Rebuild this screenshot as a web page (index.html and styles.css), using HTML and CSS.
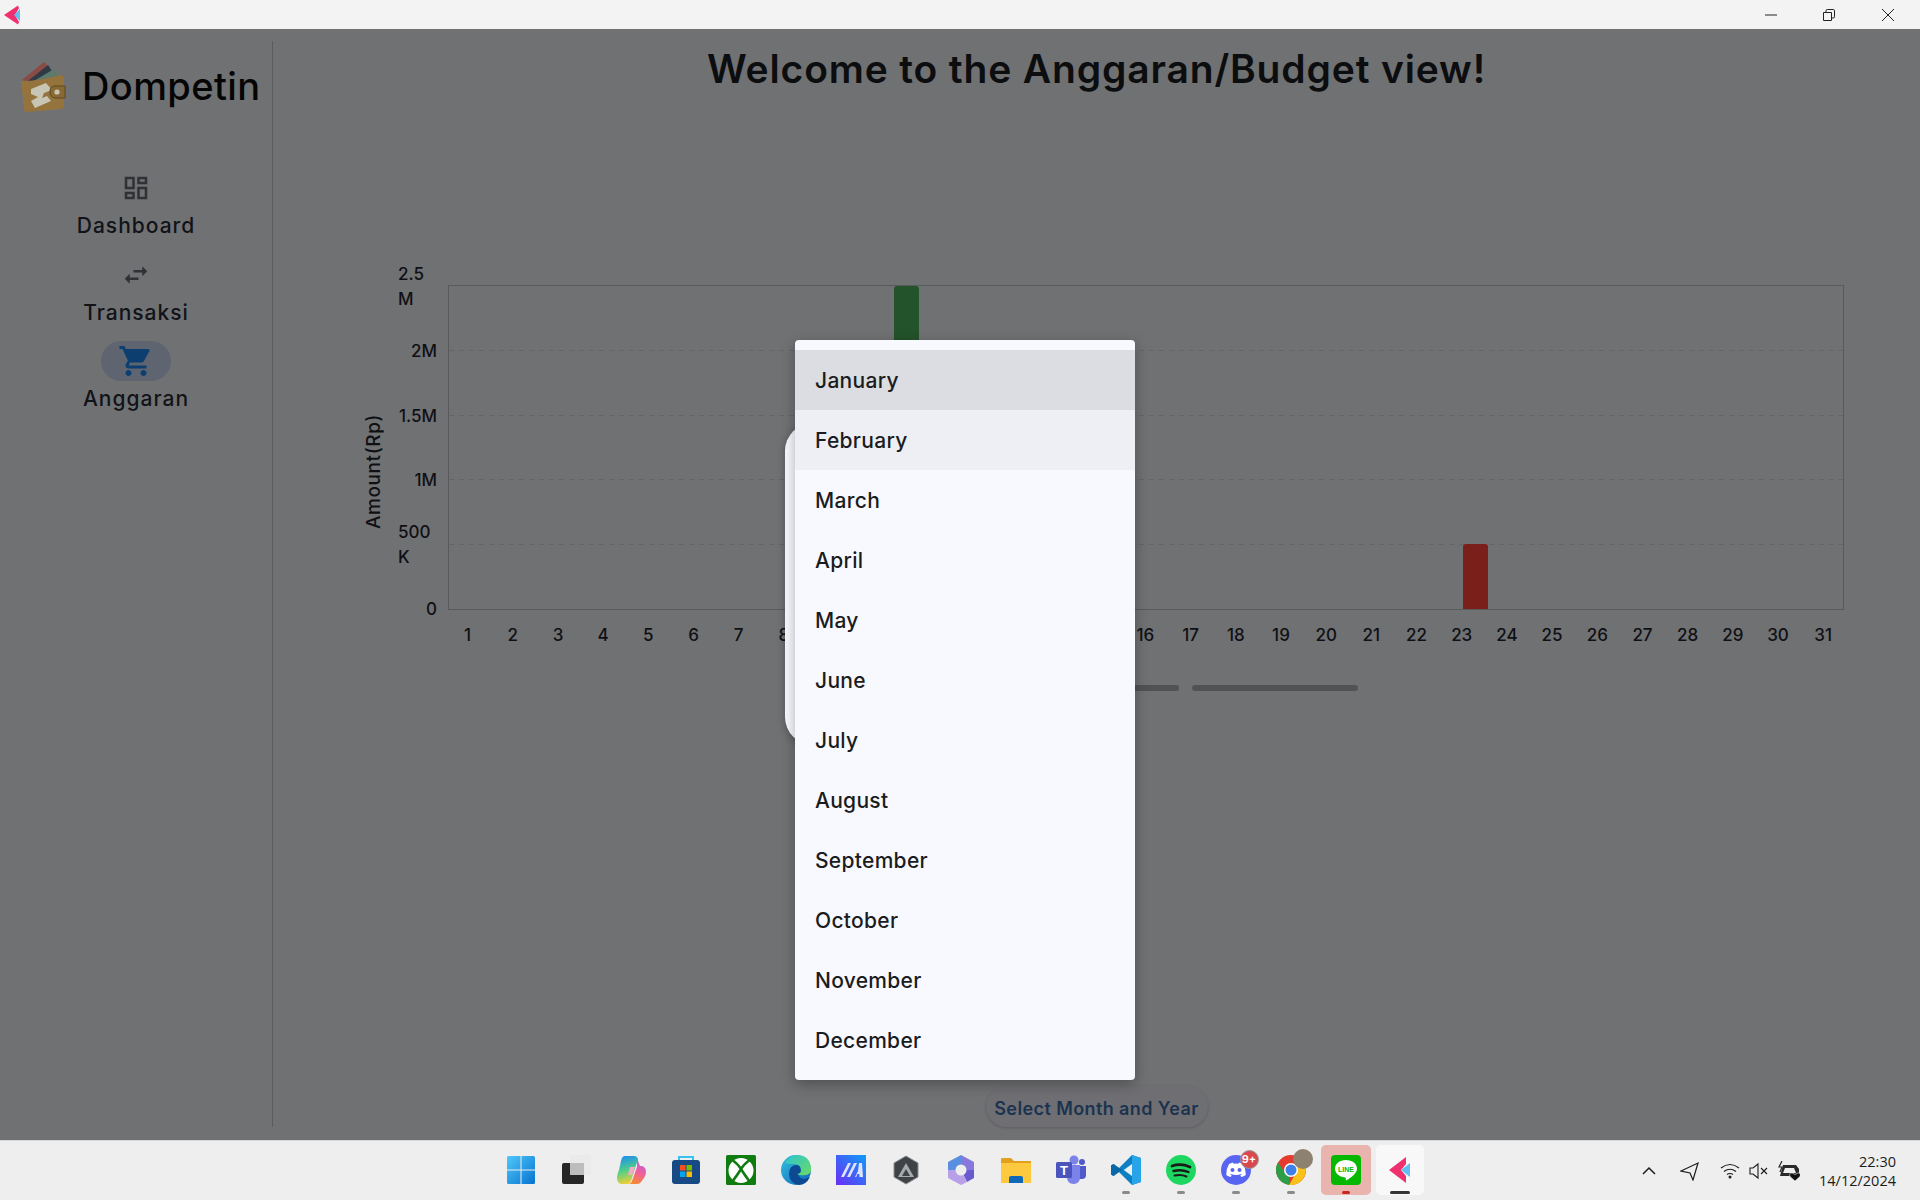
FILE: index.html
```html
<!DOCTYPE html>
<html lang="en">
<head>
    <meta charset="UTF-8">
    <meta name="viewport" content="width=device-width, initial-scale=1.0">
    <title>Dompetin</title>
    <link rel="stylesheet" href="styles.css">
</head>
<body>
<div class="screen">
    <div class="titlebar">
        <svg class="app-icon" viewBox="0 0 16 20"><path fill="#f0306e" d="M0 10 14 0.5 15 3 11 10 15 17 14 19.5z"/><path fill="#62bdf0" d="M16 4v12l-6-6z"/></svg>
        <div class="win-buttons">
            <span class="win-btn"><svg width="14" height="14" viewBox="0 0 14 14"><path d="M1 7h12" stroke="#222" fill="none"/></svg></span>
            <span class="win-btn"><svg width="14" height="14" viewBox="0 0 14 14"><path d="M1.500 4.500h8v8h-8z M4 4.500V2.800Q4 1.500 5.300 1.500h6Q12.500 1.500 12.500 2.800v6Q12.500 10 11 10H9.500" stroke="#222" fill="none"/></svg></span>
            <span class="win-btn"><svg width="14" height="14" viewBox="0 0 14 14"><path d="M1 1l12 12M13 1L1 13" stroke="#222" fill="none"/></svg></span>
        </div>
    </div>

    <div class="app">
        <aside class="sidebar">
            <div class="brand">
                <svg class="brand-logo" viewBox="0 0 46 52">
                    <path fill="#8a4a45" d="M2 19 24 1l6 6-22 14z"/>
                    <path fill="#2f3a45" d="M8 20 28 4l4 6-18 12z"/>
                    <path fill="#5d7a6d" d="M12 21 34 8l5 8-20 8z"/>
                    <path fill="#94743c" d="M1 20Q20 20 40 14q4 0 4 4v27q0 3-3 3L7 51q-3 0-3-3z"/>
                    <path fill="#c9c5b5" d="M11 28l15-6 6 7-8 3-2 5 5-2 4 5-16 7-4-7 7-4-7-3z"/>
                    <path fill="#8a6a34" stroke="#5d4622" d="M30 30q0-5 6-5h9v12h-9q-6 0-6-7z"/>
                    <circle cx="37" cy="31" r="2.600" fill="#c9c5b5"/>
                </svg>
                <span class="brand-name">Dompetin</span>
            </div>
            <nav class="nav">
                <div class="nav-item">
                    <span class="nav-pill"><svg width="30" height="30" viewBox="0 0 24 24"><path fill="#303136" d="M19 5v2h-4V5h4M9 5v6H5V5h4m10 8v6h-4v-6h4M9 17v2H5v-2h4M21 3h-8v6h8V3zM11 3H3v10h8V3zm10 8h-8v10h8V11zm-10 4H3v6h8v-6z"/></svg></span>
                    <span class="nav-label">Dashboard</span>
                </div>
                <div class="nav-item">
                    <span class="nav-pill"><svg width="30" height="30" viewBox="0 0 24 24"><path fill="#303136" d="M6.990 11L3 15l3.990 4v-3H14v-2H6.990v-3zM21 9l-3.990-4v3H10v2h7.010v3L21 9z"/></svg></span>
                    <span class="nav-label">Transaksi</span>
                </div>
                <div class="nav-item">
                    <span class="nav-pill active"><svg width="36" height="36" viewBox="0 0 24 24"><path fill="#0d3e70" d="M7 18c-1.100 0-1.990.9-1.990 2S5.900 22 7 22s2-.9 2-2-.9-2-2-2zM1 2v2h2l3.600 7.590-1.350 2.450c-.16.28-.25.61-.25.96 0 1.100.9 2 2 2h12v-2H7.420c-.14 0-.25-.11-.25-.25l.03-.12.9-1.630h7.450c.75 0 1.410-.41 1.750-1.030l3.580-6.490c.08-.14.12-.31.12-.48 0-.55-.45-1-1-1H5.210l-.94-2H1zm16 16c-1.100 0-1.990.9-1.990 2s.89 2 1.990 2 2-.9 2-2-.9-2-2-2z"/></svg></span>
                    <span class="nav-label">Anggaran</span>
                </div>
            </nav>
        </aside>

        <main class="main">
            <h1 class="page-title">Welcome to the Anggaran/Budget view!</h1>

            <div class="chart">
                <div class="axis-title">Amount(Rp)</div>
                <div class="y-axis">
                    <span class="y-tick first"><span class="wrapped">2.5<br>M</span></span>
                    <span class="y-tick"><span>2M</span></span>
                    <span class="y-tick"><span>1.5M</span></span>
                    <span class="y-tick"><span>1M</span></span>
                    <span class="y-tick"><span class="wrapped">500<br>K</span></span>
                    <span class="y-tick"><span>0</span></span>
                </div>
                <div class="plot">
                    <div class="grid-lines"><i></i><i></i><i></i><i></i></div>
                    <div class="bars">
                        <div class="bar income" style="grid-column: 11; height: 100%"></div>
                        <div class="bar expense" style="grid-column: 23; height: 20%"></div>
                    </div>
                </div>
                <div class="x-axis">
                    <span>1</span><span>2</span><span>3</span><span>4</span><span>5</span><span>6</span><span>7</span><span>8</span><span>9</span><span>10</span><span>11</span><span>12</span><span>13</span><span>14</span><span>15</span><span>16</span><span>17</span><span>18</span><span>19</span><span>20</span><span>21</span><span>22</span><span>23</span><span>24</span><span>25</span><span>26</span><span>27</span><span>28</span><span>29</span><span>30</span><span>31</span>
                </div>
            </div>

            <div class="picker-bars"><span class="bar-one"></span><span class="bar-two"></span></div>

            <button class="select-btn">Select Month and Year</button>
        </main>
    </div>

    <div class="taskbar">
        <div class="task-left"></div>
        <div class="task-apps">
            <span class="task-item"><svg class="ti" viewBox="0 0 30 30"><defs><linearGradient id="win" x1="0" y1="0" x2="1" y2="1"><stop offset="0" stop-color="#4fc8fa"/><stop offset="1" stop-color="#0673d0"/></linearGradient></defs><path fill="url(#win)" d="M1 2.500Q1 1 2.500 1H14.500V14.500H1zM15.500 1H27.500Q29 1 29 2.500V14.500H15.500zM1 15.500H14.500V29H2.500Q1 29 1 27.500zM15.500 15.500H29V27.500Q29 29 27.500 29H15.500z"/></svg></span>
            <span class="task-item"><svg class="ti" viewBox="0 0 30 30"><rect x="1" y="8" width="22" height="21" rx="2" fill="#262626"/><rect x="9" y="0" width="21" height="20" rx="2" fill="#e9e9e9" opacity=".85"/><rect x="9" y="8" width="14" height="12" fill="#bdbdbd"/></svg></span>
            <span class="task-item"><svg class="ti" viewBox="0 0 30 30"><defs><linearGradient id="cop1" x1="0.300" y1="0" x2="0.500" y2="1"><stop offset="0" stop-color="#1f8ef0"/><stop offset=".5" stop-color="#4ccf8a"/><stop offset="1" stop-color="#f5cf30"/></linearGradient><linearGradient id="cop2" x1="0.700" y1="0" x2="0.400" y2="1"><stop offset="0" stop-color="#b25eea"/><stop offset=".55" stop-color="#f0609a"/><stop offset="1" stop-color="#f78a30"/></linearGradient></defs><path fill="url(#cop1)" d="M9 1h9q3 0 4 3l-7 22q-1 3-4 3H5q-4-1-4-6 0-4 2-8l2-9q1-5 4-5z"/><path fill="url(#cop2)" d="M21 3l1 3 2 5h2q4 1 4 6 0 3-2 6l-3 4q-1 2-4 2H12q3 0 4-3l5-14z"/><path fill="#f6a9c8" d="M14 12h5l-3 8h-4z"/></svg></span>
            <span class="task-item"><svg class="ti" viewBox="0 0 30 30"><path fill="none" stroke="#36c3f0" stroke-width="2" d="M8 7V2h14v5"/><rect x="1" y="5" width="28" height="24" rx="3" fill="#174a85"/><rect x="9" y="10" width="5.500" height="5.500" fill="#f25022"/><rect x="15.500" y="10" width="5.500" height="5.500" fill="#7fba00"/><rect x="9" y="16.500" width="5.500" height="5.500" fill="#00a4ef"/><rect x="15.500" y="16.500" width="5.500" height="5.500" fill="#ffb900"/></svg></span>
            <span class="task-item"><svg class="ti" viewBox="0 0 30 30"><rect width="30" height="30" rx="1.500" fill="#107c10"/><circle cx="15" cy="15.500" r="12.500" fill="#fff"/><path fill="none" stroke="#107c10" stroke-width="2.600" d="M5 4Q12 9 15 14 18 19 24 27M25 4Q18 9 15 14 12 19 6 27"/></svg></span>
            <span class="task-item"><svg class="ti" viewBox="0 0 30 30"><defs><linearGradient id="edge1" x1="0" y1="0" x2="1" y2="1"><stop offset="0" stop-color="#33c1e0"/><stop offset="1" stop-color="#1060b8"/></linearGradient><linearGradient id="edge2" x1="0" y1="0" x2="1" y2="1"><stop offset="0" stop-color="#2cc4d0"/><stop offset="1" stop-color="#6bdc62"/></linearGradient></defs><circle cx="15" cy="15" r="15" fill="url(#edge1)"/><path fill="#0b4a92" d="M8 19q0-9 8-9 6 0 7 6 0 3-3 3h-3q3 8 12 3-4 8-11 8-10-2-10-11z"/><path fill="url(#edge2)" d="M4 8q5-8 12-8 12 0 14 12 1 7-5 8-6 1-9-1 3 0 4-3 0-7-7-7-6 0-9-1z"/></svg></span>
            <span class="task-item"><svg class="ti" viewBox="0 0 30 30"><defs><linearGradient id="ma" x1="0" y1="1" x2="1" y2="0"><stop offset="0" stop-color="#6a2cf5"/><stop offset="1" stop-color="#0f9cf8"/></linearGradient></defs><rect width="30" height="30" fill="url(#ma)"/><path fill="#dfe2ff" d="M5 22 12 8h3L8 22zM11 22 18 8h3l-7 14zM19 22l3-6 1-8h3l1 14h-3.500l-.2-3h-2l-1 3z"/></svg></span>
            <span class="task-item"><svg class="ti" viewBox="0 0 30 30"><path fill="#3f4347" stroke="#8a8d90" d="M15 1 27 8v14l-12 7L3 22V8z"/><path fill="#c9cdd0" d="M15 8l8 14H7z" opacity=".75"/><path fill="#3f4347" d="M15 14l4 7h-8z"/></svg></span>
            <span class="task-item"><svg class="ti" viewBox="0 0 30 30"><path fill="#8678dc" d="M15 0 28 7v8H15z"/><path fill="#6a5ad0" d="M28 15v8l-7 4-6-12z"/><path fill="#b8a0e8" d="M21 27l-6 3-13-7v-8h13z"/><path fill="#5a8ee0" d="M2 15V7l13-7v15z"/><circle cx="15" cy="15" r="5.500" fill="#eee"/></svg></span>
            <span class="task-item"><svg class="ti" viewBox="0 0 30 30"><path fill="#e0a020" d="M0 4q0-1 1-1h9l3 3h17v6H0z"/><path fill="#fcc93f" d="M0 8h30v20H0z"/><path fill="#1268b8" d="M10 21h10q2 0 2 2v5H8v-5q0-2 2-2z"/></svg></span>
            <span class="task-item"><svg class="ti" viewBox="0 0 30 30"><circle cx="18" cy="5" r="4.500" fill="#7b83eb"/><circle cx="26" cy="7" r="3" fill="#5059c9"/><path fill="#5059c9" d="M22 11h8v9q0 4-4 4h-4z"/><path fill="#7b83eb" d="M11 10h13v12q0 7-6.500 7T11 22z"/><rect x="0" y="7" width="16" height="16" rx="1.500" fill="#4b53bc"/><text x="8" y="20" font-size="13" font-family="Liberation Sans" font-weight="700" fill="#fff" text-anchor="middle">T</text></svg></span>
            <span class="task-item"><svg class="ti" viewBox="0 0 30 30"><path fill="#0f7fc4" d="M21 0 8 13 2.500 9 0 10.500v9L2.500 21 8 17l13 13 9-3V3z"/><path fill="#0a67a8" d="M2.500 9 0 10.500v9L2.500 21l5.500-4 4-2-4-2z"/><path fill="#28a4e8" d="M21 0l9 3v24l-9 3V21l-9-6 9-6z"/><path fill="#efefef" d="M21 9v12l-8-6z"/></svg><span class="dot"></span></span>
            <span class="task-item"><svg class="ti" viewBox="0 0 30 30"><circle cx="15" cy="15" r="15" fill="#1ed760"/><path fill="none" stroke="#1a1a1a" stroke-linecap="round" stroke-width="2.800" d="M6 11q9-3 18 1"/><path fill="none" stroke="#1a1a1a" stroke-linecap="round" stroke-width="2.400" d="M7.500 16q8-2 15 1"/><path fill="none" stroke="#1a1a1a" stroke-linecap="round" stroke-width="2" d="M8.500 20.500q7-1.500 12 1"/></svg><span class="dot"></span></span>
            <span class="task-item"><svg class="ti" viewBox="0 0 30 30"><circle cx="15" cy="15" r="15" fill="#5865f2"/><path fill="#fff" d="M8 9q3-1.500 4-1.500l.7 1.200q2.300-.4 4.600 0l.7-1.200q1 0 4 1.500 3 5 2.800 11-2 1.500-4.500 2l-1-1.700 1.500-.9-.5-.4q-5 2-10.600 0l-.5.4 1.500.9-1 1.700q-2.500-.5-4.500-2Q5 14 8 9z"/><circle cx="11.500" cy="15" r="2" fill="#5865f2"/><circle cx="18.500" cy="15" r="2" fill="#5865f2"/></svg><span class="badge">9+</span><span class="dot"></span></span>
            <span class="task-item"><svg class="ti" viewBox="0 0 30 30"><circle cx="15" cy="15" r="15" fill="#e33b2e"/><path fill="#f9c21a" d="M15 9h13.500A15 15 0 0 1 13 29.900L20 18z"/><path fill="#2d9e48" d="M2 7.500 10 19l3 1v9.900A15 15 0 0 1 2 7.500z"/><circle cx="15" cy="15" r="7" fill="#fff"/><circle cx="15" cy="15" r="5.500" fill="#3f7fe8"/></svg><span class="avatar"></span><span class="dot"></span></span>
            <span class="task-item line"><svg class="ti" viewBox="0 0 30 30"><rect width="30" height="30" rx="4" fill="#06b800"/><path fill="#fff" d="M15 5c6.500 0 11 3.800 11 8.800 0 4.500-6 9-10.500 11.500-1 .5-.8-.7-.6-1.700.1-.8-.3-1-1-1.100C8 21.800 4 18.200 4 13.800 4 8.800 8.500 5 15 5z"/><text x="15" y="16.500" font-size="7" font-family="Liberation Sans" font-weight="700" fill="#06b800" text-anchor="middle">LINE</text></svg><span class="dot red"></span></span>
            <span class="task-item current"><svg class="ti" viewBox="0 0 30 30"><path fill="#f0306e" d="M4 15 21 2v7l-5 6 5 6v7z"/><path fill="#62bdf0" d="M25 8v14l-9-7z"/></svg><span class="dot long"></span></span>
        </div>
        <div class="tray">
            <svg class="tray-icon" width="16" height="16" viewBox="0 0 16 16"><path d="M2 11 8 5l6 6" fill="none" stroke="#1c1c1c" stroke-width="1.500"/></svg>
            <svg class="tray-icon arrow-icon" width="20" height="20" viewBox="0 0 20 20"><path d="M1 10 18 2l-5 17-3-7z" fill="none" stroke="#1c1c1c" stroke-width="1.200"/></svg>
            <svg class="tray-icon wifi-icon" width="20" height="18" viewBox="0 0 20 18"><path d="M1 6q9-7 18 0M4 9.500q6-4.500 12 0M7 12.500q3-2 6 0" fill="none" stroke="#1c1c1c" stroke-width="1.200"/><circle cx="10" cy="15" r="1.500" fill="#1c1c1c"/></svg>
            <svg class="tray-icon" width="20" height="18" viewBox="0 0 20 18"><path d="M1 6h3l5-4v14l-5-4H1zM12 6l6 6M18 6l-6 6" fill="none" stroke="#1c1c1c" stroke-width="1.100"/></svg>
            <svg class="tray-icon" width="22" height="20" viewBox="0 0 22 20"><path d="M5 4h13l3 4v7H2z" fill="#2a2a2a"/><path d="M7 7h9l2 5H5z" fill="#eee"/><path d="M4 0 1 6h3L2 11" fill="none" stroke="#2a2a2a" stroke-width="1.200"/><path d="M17 20l-5-4.500q-1.500-3.500 2-3.500l3 1.500 3-1.500q3.500 0 2 3.500z" fill="#111" stroke="#eee" stroke-width=".6"/></svg>
            <div class="clock"><span>22:30</span><span>14/12/2024</span></div>
        </div>
    </div>

    <!-- dialog under the dropdown, only a sliver of it shows -->
    <div class="dialog"></div>

    <div class="month-menu">
        <div class="month-item selected">January</div>
        <div class="month-item hover">February</div>
        <div class="month-item">March</div>
        <div class="month-item">April</div>
        <div class="month-item">May</div>
        <div class="month-item">June</div>
        <div class="month-item">July</div>
        <div class="month-item">August</div>
        <div class="month-item">September</div>
        <div class="month-item">October</div>
        <div class="month-item">November</div>
        <div class="month-item">December</div>
    </div>
</div>
</body>
</html>
```

FILE: styles.css
```css
* {
    box-sizing: border-box;
}
body {
    margin: 0;
    font-family: Inter, "Noto Sans", sans-serif;
    background: #707173;
}
.screen {
    position: relative;
    width: 1920px;
    height: 1200px;
    overflow: hidden;
    display: flex;
    flex-direction: column;
}

/* window title bar */
.titlebar {
    height: 29px;
    background: #f3f3f3;
    display: flex;
    align-items: center;
    justify-content: space-between;
    padding: 0 3px 0 4px;
    flex: none;
}
.app-icon {
    width: 16px;
    height: 20px;
}
.win-buttons {
    display: flex;
}
.win-btn {
    width: 58.5px;
    height: 28px;
    display: flex;
    align-items: center;
    justify-content: center;
}

.app {
    flex: 1;
    display: flex;
    min-height: 0;
    background: #707173;
}

/* left nav */
.sidebar {
    width: 273px;
    flex: none;
    margin: 12px 0 13px;
    border-right: 1.5px solid #5c5d5f;
    display: flex;
    flex-direction: column;
    align-items: center;
}
.brand {
    display: flex;
    align-items: center;
    width: 100%;
    padding: 20px 0 0 20px;
    gap: 16px;
}
.brand-logo {
    width: 46px;
    height: 52px;
}
.brand-name {
    font-size: 38px;
    line-height: 50px;
    margin-top: -2px;
    font-weight: 500;
    color: #050506;
    letter-spacing: .4px;
}
.nav {
    margin-top: 55px;
    display: flex;
    flex-direction: column;
    gap: 14.5px;
    align-items: center;
}
.nav-item {
    display: flex;
    flex-direction: column;
    align-items: center;
    height: 72px;
}
.nav-pill {
    width: 70px;
    height: 40px;
    border-radius: 20px;
    display: flex;
    align-items: center;
    justify-content: center;
}
.nav-pill.active {
    background: #5e6570;
}
.nav-label {
    margin-top: 4px;
    line-height: 28px;
    font-size: 21px;
    font-weight: 500;
    color: #111318;
    letter-spacing: 1px;
}

/* main column */
.main {
    flex: 1;
    min-width: 0;
    display: flex;
    flex-direction: column;
}
.page-title {
    margin: 12px 0 0;
    height: 56px;
    line-height: 56px;
    text-align: center;
    font-size: 39px;
    font-weight: 600;
    letter-spacing: .85px;
    color: #0c0d0f;
}
.chart {
    margin: 188px 0 0 87px;
    display: grid;
    grid-template-columns: 26px 40px 1396px;
    grid-template-rows: 325px 50px;
    column-gap: 11px;
}
.axis-title {
    grid-row: 1 / 3;
    writing-mode: vertical-rl;
    transform: rotate(180deg);
    justify-self: center;
    align-self: center;
    font-size: 19px;
    font-weight: 500;
    color: #0f1013;
    letter-spacing: .6px;
    margin-bottom: 1px;
}
.y-axis {
    display: flex;
    flex-direction: column;
    justify-content: space-between;
    font-size: 17px;
    font-weight: 500;
    line-height: 25px;
    color: #0f1013;
}
.y-tick {
    height: 0;
    display: flex;
    align-items: center;
    justify-content: flex-end;
}
.y-tick.first {
    margin-top: 2px;
}
.wrapped {
    width: 39px;
}
.plot {
    position: relative;
    border: 1.5px solid #595a5c;
}
.grid-lines {
    height: 100%;
    display: flex;
    flex-direction: column;
    justify-content: space-evenly;
}
.grid-lines i {
    display: block;
    height: 1px;
    background: repeating-linear-gradient(to right, #646567 0 5px, transparent 5px 10px);
}
.bars {
    position: absolute;
    top: 0;
    bottom: 0;
    left: -4px;
    display: grid;
    grid-template-columns: repeat(31, 45.2px);
    align-items: end;
}
.bar {
    grid-row: 1;
    width: 25px;
    border-radius: 3px 3px 0 0;
}
.bar.income {
    background: #23532a;
    justify-self: end;
    margin-right: 22.6px;
}
.bar.expense {
    background: #7a1f1a;
    margin-left: 24px;
}
.x-axis {
    grid-column: 3;
    margin-left: -3px;
    display: grid;
    grid-template-columns: repeat(31, 45.2px);
    align-items: center;
    text-align: center;
    font-size: 17px;
    font-weight: 500;
    color: #0f1013;
}
.picker-bars {
    margin: 25px 0 0 727px;
    display: flex;
    gap: 13px;
}
.picker-bars span {
    height: 6px;
    border-radius: 3px;
    background: #515254;
}
.bar-one {
    width: 179px;
}
.bar-two {
    width: 166px;
}
.select-btn {
    margin: auto 0 13px;
    align-self: center;
    width: 222px;
    height: 41px;
    border: 0;
    border-radius: 21px;
    background: #6f6f73;
    box-shadow: 0 1px 3px rgba(0, 0, 0, .18);
    color: #1c334f;
    font-family: inherit;
    font-size: 18px;
    font-weight: 600;
    letter-spacing: .4px;
    padding: 3px 0 0;
}

/* windows taskbar */
.taskbar {
    height: 60px;
    flex: none;
    background: #eeeeee;
    border-top: 1px solid #d9d9d9;
    display: grid;
    grid-template-columns: 1fr auto 1fr;
    align-items: center;
}
.task-apps {
    display: flex;
    padding-left: 2px;
    margin-top: -1px;
}
.task-item {
    position: relative;
    width: 55px;
    height: 50px;
    display: flex;
    align-items: center;
    justify-content: center;
}
.ti {
    width: 30px;
    height: 30px;
}
.task-item.line {
    background: #e9b3ae;
    border-radius: 5px;
    width: 50px;
    margin: 0 2.5px;
}
.task-item.current {
    background: #f8f8f8;
    border-radius: 5px;
    width: 48px;
    margin: 0 4.5px 0 2.5px;
}
.dot {
    position: absolute;
    left: 50%;
    bottom: 1px;
    width: 8px;
    height: 3px;
    margin-left: -4px;
    border-radius: 2px;
    background: #8a8a8a;
}
.dot.red {
    background: #c8281e;
}
.dot.long {
    width: 20px;
    margin-left: -10px;
    background: #333;
}
.badge {
    position: absolute;
    left: 31px;
    top: 5px;
    width: 19px;
    height: 19px;
    border-radius: 50%;
    background: #d9484f;
    border: 1px solid #999;
    color: #fff;
    font-size: 11px;
    font-weight: 600;
    line-height: 17px;
    text-align: center;
}
.avatar {
    position: absolute;
    left: 29px;
    top: 4px;
    width: 20px;
    height: 20px;
    border-radius: 50%;
    background: #8d8170;
}
.tray {
    display: flex;
    align-items: center;
    justify-content: flex-end;
    padding-right: 24px;
    gap: 9px;
}
.arrow-icon {
    margin: 0 11px 0 14px;
}
.clock {
    margin-left: 10px;
    display: flex;
    flex-direction: column;
    align-items: flex-end;
    font-family: "Open Sans", sans-serif;
    font-size: 14.5px;
    line-height: 19px;
    color: #1c1c1c;
}

/* popups */
.dialog {
    position: absolute;
    left: 785px;
    top: 423px;
    width: 300px;
    height: 322px;
    border-radius: 28px;
    background: #f8f9ff;
    box-shadow: 0 2px 8px rgba(0, 0, 0, .25);
}
.month-menu {
    position: absolute;
    left: 795px;
    top: 340px;
    width: 340px;
    padding: 10px 0;
    border-radius: 4px;
    background: #f8f9ff;
    box-shadow: 0 4px 14px rgba(0, 0, 0, .3);
}
.month-item {
    height: 60px;
    line-height: 62px;
    padding-left: 20px;
    font-size: 21px;
    font-weight: 500;
    letter-spacing: .3px;
    color: #1a1c20;
}
.month-item.selected {
    background: #dcdde2;
}
.month-item.hover {
    background: #eeeff4;
}
```
